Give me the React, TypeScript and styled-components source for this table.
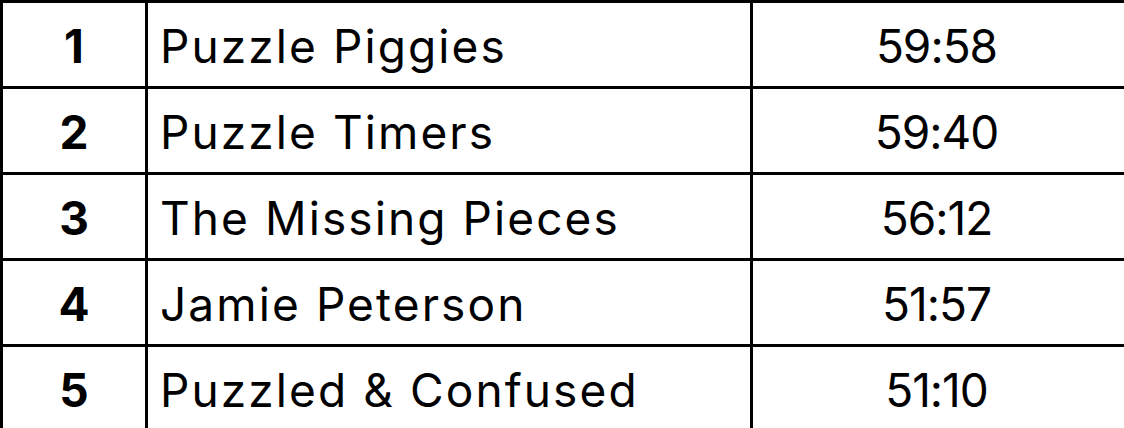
import styled, { createGlobalStyle } from "styled-components";

const GlobalStyle = createGlobalStyle`
  html, body {
    margin: 0;
    padding: 0;
    background: #ffffff;
    overflow: hidden;
  }
`;

type Entry = { rank: number; team: string; time: string };

const entries: Entry[] = [
  { rank: 1, team: "Puzzle Piggies", time: "59:58" },
  { rank: 2, team: "Puzzle Timers", time: "59:40" },
  { rank: 3, team: "The Missing Pieces", time: "56:12" },
  { rank: 4, team: "Jamie Peterson", time: "51:57" },
  { rank: 5, team: "Puzzled & Confused", time: "51:10" },
];

const Board = styled.div`
  width: 1124px;
  height: 428px;
  overflow: hidden;
  font-family: Inter, "Open Sans", sans-serif;
  color: #000000;
`;

const Row = styled.div`
  display: grid;
  grid-template-columns: 145px 605px 1fr;
  height: 86px;
`;

const Cell = styled.div<{ $align: "center" | "left" }>`
  box-sizing: border-box;
  border-left: 3px solid #000000;
  border-top: 3px solid #000000;
  display: flex;
  align-items: center;
  justify-content: ${(p) => (p.$align === "center" ? "center" : "flex-start")};
  padding-left: ${(p) => (p.$align === "left" ? "12px" : "0")};
  padding-top: 3px;
  font-size: 46px;
  line-height: 1;
  letter-spacing: 2.1px;
  white-space: nowrap;
`;

const Rank = styled(Cell)`
  font-weight: 700;
  letter-spacing: 0;
`;

const Time = styled(Cell)`
  letter-spacing: -1px;
  padding-right: 4px;
`;

export default function App() {
  return (
    <>
      <GlobalStyle />
      <Board>
        {entries.map((e) => (
          <Row key={e.rank}>
            <Rank $align="center">{e.rank}</Rank>
            <Cell $align="left">{e.team}</Cell>
            <Time $align="center">{e.time}</Time>
          </Row>
        ))}
      </Board>
    </>
  );
}
